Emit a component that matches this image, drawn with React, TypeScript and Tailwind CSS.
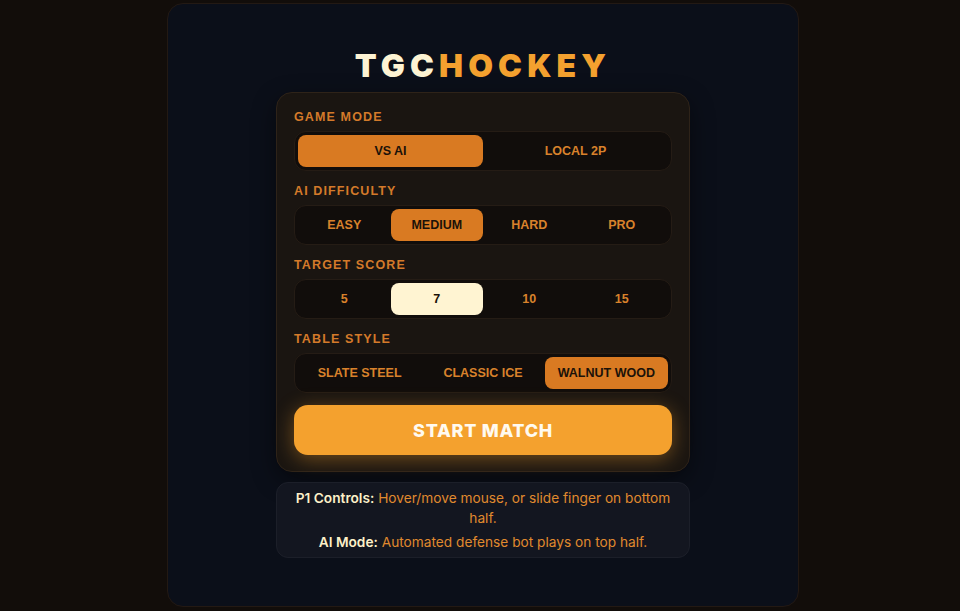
const modes = ["VS AI", "LOCAL 2P"];
const levels = ["EASY", "MEDIUM", "HARD", "PRO"];
const scores = ["5", "7", "10", "15"];
const tables = ["SLATE STEEL", "CLASSIC ICE", "WALNUT WOOD"];

type SegmentProps = {
  options: string[];
  active: string;
  cols: string;
  light?: boolean;
};

function Segment({ options, active, cols, light }: SegmentProps) {
  return (
    <div className={`grid ${cols} h-10 rounded-xl border border-[#251c15] bg-[#110d0b] p-[3px]`}>
      {options.map((o) => {
        const on = o === active;
        const tone = on
          ? light
            ? "bg-[#fff4d2] text-[#1a1208]"
            : "bg-[#d97a22] text-[#1b1209]"
          : "text-[#d9822b]";
        return (
          <button
            key={o}
            className={`flex items-center justify-center rounded-lg text-[12.5px] font-bold ${tone}`}
            style={{ fontFamily: '"Liberation Sans", Arial, sans-serif' }}
          >
            {o}
          </button>
        );
      })}
    </div>
  );
}

function Label({ children }: { children: string }) {
  return (
    <div
      className="mb-[6px] text-[12.5px] leading-4 font-bold tracking-[0.09em] text-[#d47a2a]"
      style={{ fontFamily: '"Liberation Sans", Arial, sans-serif' }}
    >
      {children}
    </div>
  );
}

export default function App() {
  return (
    <div
      className="flex h-[611px] w-full justify-center bg-[#120d0a] pt-[3px] pl-[6px]"
      style={{ fontFamily: "Inter, sans-serif" }}
    >
      <div className="flex h-[604px] w-[632px] flex-col items-center rounded-2xl border border-[#231913] bg-[#0b0f19] pt-[42px]">
        <h1 className="text-[32px] leading-10 font-black tracking-[0.16em]">
          <span className="text-[#fdf3d3]">TGC</span>
          <span className="text-[#f4a12f]">HOCKEY</span>
        </h1>

        <div className="mt-[6px] flex w-[414px] flex-col gap-3 rounded-2xl border border-[#2e2319] bg-[#1a1511] px-[17px] py-4 shadow-[0_8px_24px_rgba(0,0,0,0.45)]">
          <div>
            <Label>GAME MODE</Label>
            <Segment options={modes} active="VS AI" cols="grid-cols-2" />
          </div>
          <div>
            <Label>AI DIFFICULTY</Label>
            <Segment options={levels} active="MEDIUM" cols="grid-cols-4" />
          </div>
          <div>
            <Label>TARGET SCORE</Label>
            <Segment options={scores} active="7" cols="grid-cols-4" light />
          </div>
          <div>
            <Label>TABLE STYLE</Label>
            <Segment options={tables} active="WALNUT WOOD" cols="grid-cols-3" />
          </div>
          <button className="h-[50px] rounded-[14px] bg-[#f4a12e] text-[18px] font-extrabold tracking-[0.04em] text-[#fffaf0] shadow-[0_4px_20px_rgba(244,161,46,0.4)]">
            START MATCH
          </button>
        </div>

        <div className="mt-[10px] flex w-[414px] flex-col gap-1 rounded-xl border border-[#1c1f29] bg-[#131620] px-3 py-[5px] text-center text-[13.7px] leading-5 text-[#e08a2e]">
          <p>
            <span className="font-semibold text-[#fdf0c8]">P1 Controls:</span> Hover/move mouse, or slide finger on
            bottom half.
          </p>
          <p>
            <span className="font-semibold text-[#fdf0c8]">AI Mode:</span> Automated defense bot plays on top half.
          </p>
        </div>
      </div>
    </div>
  );
}
